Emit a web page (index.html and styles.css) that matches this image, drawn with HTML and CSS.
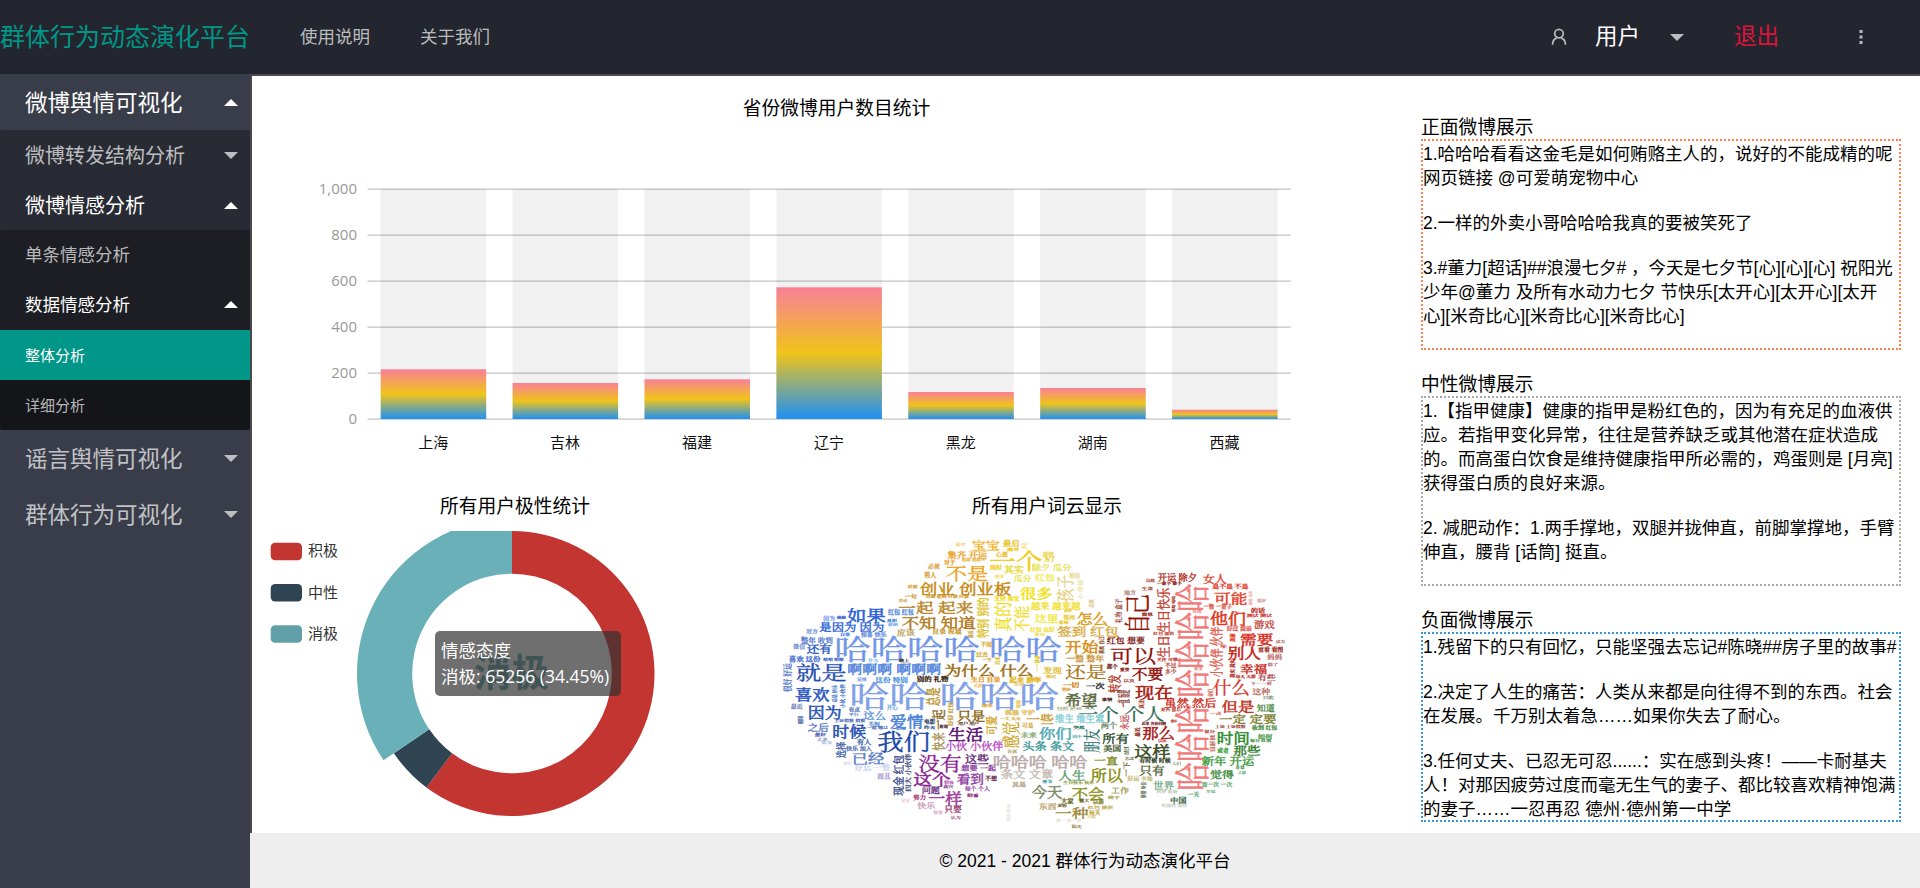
FILE: index.html
```html
<!DOCTYPE html>
<html lang="zh-CN">
<head>
<meta charset="utf-8">
<title>群体行为动态演化平台</title>
<link rel="stylesheet" href="styles.css">
</head>
<body>
<div class="app">
  <header class="header">
    <div class="logo">群体行为动态演化平台</div>
    <nav class="nav"><a>使用说明</a><a>关于我们</a></nav>
    <div class="account">
      <svg class="icon-user" width="16" height="18" viewBox="0 0 16 18"><circle cx="8" cy="5.6" r="4.3"/><path d="M1.6 16.8V16a6.4 6.4 0 0 1 4-5.9M14.4 16.8V16a6.4 6.4 0 0 0-4-5.9"/></svg>
      <span class="user-name">用户</span>
      <i class="caret caret-down"></i>
      <a class="logout">退出</a>
      <svg class="icon-more" width="4" height="16" viewBox="0 0 4 16"><rect x=".5" y="1" width="3" height="3"/><rect x=".5" y="6.5" width="3" height="3"/><rect x=".5" y="12" width="3" height="3"/></svg>
    </div>
  </header>
  <div class="body">
    <aside class="side">
      <div class="item top on">微博舆情可视化<i class="caret caret-up"></i></div>
      <div class="sub level2">
        <div class="item">微博转发结构分析<i class="caret caret-down"></i></div>
        <div class="item on">微博情感分析<i class="caret caret-up"></i></div>
        <div class="sub level3">
          <div class="item">单条情感分析</div>
          <div class="item on">数据情感分析<i class="caret caret-up"></i></div>
          <div class="level4">
            <div class="item active">整体分析</div>
            <div class="item">详细分析</div>
          </div>
        </div>
      </div>
      <div class="item top">谣言舆情可视化<i class="caret caret-down"></i></div>
      <div class="item top">群体行为可视化<i class="caret caret-down"></i></div>
    </aside>
    <div class="content">
      <main class="main">
        <div class="charts">
          <section class="bar-card">
            <h2 class="title">省份微博用户数目统计</h2>
            <svg class="bar-chart" id="bars" width="1169" height="370" viewBox="252 122 1169 370">
              <defs><linearGradient id="barFill" x1="0" y1="0" x2="0" y2="1"><stop offset="0" stop-color="#f88098"/><stop offset=".5" stop-color="#f0c419"/><stop offset="1" stop-color="#1e90f5"/></linearGradient></defs>
            </svg>
          </section>
          <div class="row">
            <section class="pie-card">
              <h2 class="title">所有用户极性统计</h2>
              <div class="pie-wrap">
                <svg width="518" height="313" viewBox="252 520 518 313">
                  <defs><clipPath id="pieClip"><rect x="252" y="531" width="518" height="302"/></clipPath></defs>
                  <g clip-path="url(#pieClip)" id="pie"></g>
                  <g class="legend">
                    <rect x="270.7" y="542.7" width="31.3" height="17.5" rx="4.4" fill="#c23531"/><text x="308" y="556">积极</text>
                    <rect x="270.7" y="584" width="31.3" height="17.5" rx="4.4" fill="#2f4554"/><text x="308" y="597.5">中性</text>
                    <rect x="270.7" y="625.3" width="31.3" height="17.5" rx="4.4" fill="#61a0a8"/><text x="308" y="638.5">消极</text>
                  </g>
                  <text class="pie-label" x="511.5" y="686">消极</text>
                </svg>
                <div class="tooltip">情感态度<br>消极: 65256 (34.45%)</div>
              </div>
            </section>
            <section class="cloud-card">
              <h2 class="title">所有用户词云显示</h2>
              <svg class="cloud" id="cloud" width="530" height="313" viewBox="0 0 1590 939"></svg>
            </section>
          </div>
        </div>
        <aside class="posts">
          <h3>正面微博展示</h3>
          <div class="post-box positive">
            <p>1.哈哈哈看看这金毛是如何贿赂主人的，说好的不能成精的呢<br>网页链接 @可爱萌宠物中心</p>
            <p>2.一样的外卖小哥哈哈哈我真的要被笑死了</p>
            <p>3.#董力[超话]##浪漫七夕# ，今天是七夕节[心][心][心] 祝阳光<br>少年@董力 及所有水动力七夕 节快乐[太开心][太开心][太开<br>心][米奇比心][米奇比心][米奇比心]</p>
          </div>
          <h3>中性微博展示</h3>
          <div class="post-box neutral">
            <p>1.【指甲健康】健康的指甲是粉红色的，因为有充足的血液供<br>应。若指甲变化异常，往往是营养缺乏或其他潜在症状造成<br>的。而高蛋白饮食是维持健康指甲所必需的，鸡蛋则是 [月亮]<br>获得蛋白质的良好来源。</p>
            <p>2. 减肥动作：1.两手撑地，双腿并拢伸直，前脚掌撑地，手臂<br>伸直，腰背 [话筒] 挺直。</p>
          </div>
          <h3>负面微博展示</h3>
          <div class="post-box negative">
            <p>1.残留下的只有回忆，只能坚强去忘记#陈晓##房子里的故事#</p>
            <p>2.决定了人生的痛苦：人类从来都是向往得不到的东西。社会<br>在发展。千万别太着急……如果你失去了耐心。</p>
            <p>3.任何丈夫、已忍无可忍......：实在感到头疼！——卡耐基夫<br>人！对那因疲劳过度而毫无生气的妻子、都比较喜欢精神饱满<br>的妻子……一忍再忍 德州·德州第一中学</p>
          </div>
        </aside>
      </main>
      <footer class="footer">© 2021 - 2021 群体行为动态演化平台</footer>
    </div>
  </div>
</div>
<script src="charts.js"></script>
</body>
</html>
```
FILE: styles.css
```css
* { box-sizing: border-box; }
body {
  margin: 0;
  font-family: "Liberation Sans", "Noto Sans CJK SC", sans-serif;
  font-size: 17.5px;
  color: #000;
  background: #fff;
}
.app { display: flex; flex-direction: column; height: 888px; width: 1920px; overflow: hidden; }
.header { flex: none; display: flex; align-items: center; height: 74px; background: #23262e; color: rgba(255,255,255,.7); line-height: 74px; }
.logo { width: 250px; font-size: 25px; color: #009688; white-space: nowrap; }
.nav { display: flex; gap: 50px; padding-left: 50px; }
.account { display: flex; align-items: center; margin-left: auto; padding-right: 57px; }
.icon-user { fill: none; stroke: #b9babd; stroke-width: 1.7; margin-right: 28px; }
.user-name { font-size: 22.5px; color: #fff; margin-right: 30px; }
.logout { font-size: 22.5px; color: #dc143c; margin: 0 80px 0 50px; }
.icon-more { fill: #b9babd; }
.caret { display: block; width: 0; height: 0; border: 7px solid transparent; }
.caret-down { border-top-color: #bdbec1; border-bottom-width: 0; }
.caret-up { border-bottom-color: #fff; border-top-width: 0; }

.body { flex: 1; display: flex; min-height: 0; }
.side { flex: none; width: 250px; background: #393d49; color: rgba(255,255,255,.7); }
.item { display: flex; align-items: center; justify-content: space-between; height: 50px; padding: 0 12px 2px 25px; white-space: nowrap; }
.item .caret { margin-top: 2px; }
.item.top { height: 56px; font-size: 22.5px; }
.item.on, .item.active { color: #fff; }
.item.active { background: #009688; }
.sub { border-radius: 2px; overflow: hidden; }
.level2 { background: #282b33; font-size: 20px; }
.level3 { background: #1c1e24; font-size: 17.5px; }
.level3 .item { padding-bottom: 3px; }
.level4 { background: #141519; font-size: 15px; }
.level4 .item { padding-bottom: 2px; }

.content { flex: 1; display: flex; flex-direction: column; min-width: 0; }
.main { flex: 1; display: flex; min-height: 0; border: solid #4a4a4a; border-width: 2px 0 0 2px; }
.charts { width: 1169px; padding-top: 18px; }
.title { margin: 0; height: 28px; font-size: 18.75px; font-weight: 400; line-height: 30px; text-align: center; }
svg { display: block; }
.row { display: flex; }
.pie-card { width: 518px; }
.pie-card .title { padding-left: 8px; }
.cloud-card { width: 554px; }
.pie-wrap { position: relative; }
.tooltip { position: absolute; left: 183px; top: 111px; width: 186px; height: 65px; padding: 6px; border-radius: 5px; background: rgba(50,50,50,.7); color: #fff; font-family: "Open Sans", "Noto Sans CJK SC", sans-serif; font-size: 17.5px; line-height: 26.25px; white-space: nowrap; }
.legend text { font-size: 15px; fill: #333; }
.pie-label { font-size: 37.5px; font-weight: 700; text-anchor: middle; fill: #61a0a8; }
.axis-y { font-family: "Open Sans", sans-serif; font-size: 15px; fill: #999; text-anchor: end; }
.axis-x { font-size: 15px; fill: #111; text-anchor: middle; }
.cloud text { font-family: "Noto Serif CJK SC", "Noto Sans CJK SC", serif; font-size: 100px; font-weight: 400; white-space: pre; }

.posts { width: 480px; padding-top: 37px; white-space: nowrap; }
.posts h3 { margin: 0; height: 26px; font-size: 18.75px; line-height: 30px; font-weight: 400; }
.post-box { border: 2px dotted; line-height: 24px; margin-bottom: 20px; padding-top: 1px; }
.post-box p { margin: 0 0 21px; color: #000; }
.positive { border-color: #ff7f50; height: 211px; }
.neutral { border-color: #a9a9a9; height: 190px; }
.negative { border-color: #3498db; height: 190px; }
.footer { flex: none; height: 55px; background: #eee; text-align: center; line-height: 57px; }
```
FILE: charts.js
```js
const NS = 'http://www.w3.org/2000/svg';
function add(parent, tag, attrs, text) {
  const el = document.createElementNS(NS, tag);
  for (const k in attrs) el.setAttribute(k, attrs[k]);
  if (text) el.textContent = text;
  parent.appendChild(el);
  return el;
}

// Province bar chart
const bars = document.getElementById('bars');
const provinces = [['上海', 369.3], ['吉林', 383], ['福建', 379.3], ['辽宁', 287.3], ['黑龙', 392], ['湖南', 388], ['西藏', 409.7]];
const x0 = 367.5, step = 131.9, base = 419;
[0, 200, 400, 600, 800, 1000].forEach((v, i) => {
  const y = base - i * 46;
  add(bars, 'rect', { x: x0, y: y - .5, width: step * 7, height: 1.25, fill: '#c4c4c4' });
  add(bars, 'text', { class: 'axis-y', x: 357, y: y + 5 }, v.toLocaleString('en-US'));
});
provinces.forEach(([name, top], i) => {
  const x = x0 + i * step + 13.2;
  add(bars, 'rect', { x, y: 189, width: 105.5, height: 230, fill: 'rgba(0,0,0,.055)' });
  add(bars, 'rect', { x, y: top, width: 105.5, height: base - top, fill: 'url(#barFill)' });
  add(bars, 'text', { class: 'axis-x', x: x + 52.5, y: 447.5 }, name);
});

// Polarity ring
const pie = document.getElementById('pie');
function slice(a, b, r, R, fill) {
  const p = (ang, rad) => {
    const t = ang * Math.PI / 180;
    return (512 + rad * Math.sin(t)) + ' ' + (673.5 - rad * Math.cos(t));
  };
  const big = b - a > 180 ? 1 : 0;
  add(pie, 'path', { fill, d: `M${p(a, R)}A${R} ${R} 0 ${big} 1 ${p(b, R)}L${p(b, r)}A${r} ${r} 0 ${big} 0 ${p(a, r)}Z` });
}
slice(0, 216.9, 99.8, 142.5, '#c23531');
slice(216.9, 236, 99.8, 142.5, '#2f4554');
slice(236, 360, 99.8, 155, '#6ab0b8');

// Word cloud: text, x, y, width, height, colour, v for vertical words
const clouds = [
[0, 0, `宝宝,605,62,85,32,#f0b323
最后,698,60,52,20,#e8c020
痛苦,712,84,36,11,#f0c828
前早,557,71,30,9,#f4cf7a
小心,752,68,16,20,#f4e070,v
集齐 开运,532,93,120,22,#e8a01c
心愿,678,96,36,14,#f0c040
一个,658,92,160,60,#f0cc10
不是,527,135,128,48,#efa011
对于,522,118,34,14,#e8a030
很高 很高兴,575,116,70,9,#e8b040
必须,473,130,36,14,#e0a850
男人,462,156,38,16,#d9a13a
同时,660,135,36,14,#f0d030
其实,702,136,60,24,#e8d83a
瓜分,732,165,52,20,#e8e040
晚安,675,165,28,9,#f0e060
创业 创业板,450,186,274,38,#c88a14
联赢,413,195,30,10,#d8a850
一句,404,224,36,12,#c89a40
合适 收到 付款 付款,467,224,130,11,#d09a30
支持 淘宝,672,226,76,14,#f0e030
一起 起来,385,243,225,36,#b8862a
活动,386,237,26,9,#d0a860
不知 知道,395,288,222,38,#b07a1c
应该,380,327,55,20,#b89a50
目录 祝福,487,327,88,14,#d0a040
很多,750,200,98,36,#f0e010
真的,675,245,50,90,#eedd10,v
不能,733,257,46,78,#eedd10,v
特别 别的,622,232,34,122,#dcc020,v
最近,594,332,12,22,#d0a040,v
如果,232,264,115,42,#2a5fd8
红包 红包,354,268,78,16,#5a8ae0
因为,160,287,35,13,#7aa0e8
她她,200,289,28,9,#3060d0
真相,350,297,30,10,#4080e0
好运,354,309,30,10,#60a0e8
是因为 因为,148,307,195,30,#2a5fd8
对方,108,325,36,14,#7a9ae0
自带,210,338,30,10,#4878e0
惊喜 快乐,272,336,78,14,#6a90e0
整年 收到,92,350,97,20,#4a70c8
微信,70,374,35,12,#7a98d8
还有,110,373,75,30,#2a55c0
喜欢 这份,56,407,96,16,#4a70d0
哈哈 哈哈,160,414,62,9,#2a50c0
哈哈哈哈 哈哈,193,347,682,80,#7195e6
作为,295,416,30,10,#80c0e8
晚上,388,417,30,10,#403020
不同,632,366,34,14,#d8b040
过去,618,396,36,14,#d8b040
一生,636,413,30,10,#d0a030
近来,675,410,12,24,#d8c030,v
就是,78,430,152,55,#1f4db0
啊啊啊 啊啊啊,232,432,282,34,#4a80dc
为什么 什么,523,432,268,36,#9a6a10
一时,793,405,14,50,#e0c820,v
很好 好运,42,430,24,86,#5070c8,v
觉得,260,474,30,10,#70a0e8
这份 特别,316,470,98,16,#5a9ae0
别的 礼物,440,468,96,16,#3a2a14
生日 目录,603,470,88,14,#e0a030
起来 新年,718,470,96,16,#e0b828`],
[780, 0, `感情,38,96,34,14,#f0d860
为了,42,112,34,12,#e8d020
除夕 瓜分,5,132,120,20,#e8e040
相信,118,160,32,12,#e8d890
红包,15,163,60,20,#f0e850
小 希望,142,180,14,58,#f0e8b0,v
孩子,80,165,50,82,#e6cc70,v
越来 越来越,2,248,150,22,#f0e020
必须,177,238,14,26,#e0c890,v
这里,14,282,72,26,#f0e83a
郑州,100,287,36,12,#e8d040
商场,103,270,22,8,#e8c830
影响,88,303,28,9,#e8c830
怎么,140,278,95,38,#e09a10
红包 包好,0,323,75,12,#f0e040
身边,12,341,34,9,#f0d840
签到 红包,82,318,185,32,#d8aa40
开始,105,362,100,38,#d88a10
一整 整年,108,404,115,20,#c89030
还是,105,434,125,45,#a8700c
发现,40,440,55,20,#e0b820
情况,48,466,30,9,#e8c040
喜欢 自己,208,350,12,52,#8a4a20,v
开运 除夕,383,160,118,24,#b02a20
自然,347,177,28,9,#b04a40
一辈子 辈子,380,185,76,11,#902018
生命,335,199,34,11,#b05048
地方,282,210,36,14,#b89090
女人,518,162,72,28,#e03a20
是不是 不是,547,192,108,14,#e04838
自己,285,222,72,120,#8f1208,v
简单,335,278,34,11,#902820
礼物 盒子,255,235,20,75,#a04a40,v
生日 生日快乐,380,203,36,210,#c04030,v
哈哈 哈哈,425,228,11,48,#a02820,v
红包 福利,370,336,62,10,#c05040
关注 可惜,380,415,64,10,#b02820
哈哈哈 哈哈哈哈,437,190,100,622,#f07878,v
可能,552,217,100,36,#e8402c
一整 一辈子,520,254,86,12,#d86050
可用,487,271,28,9,#f08070
看看 走走,658,212,10,44,#f0b0a8,v
很好,682,237,26,9,#d09088
的话,663,262,42,14,#c03830
他们,540,273,108,42,#e03820
测试 测试,650,281,76,10,#c84840
游戏,672,302,62,24,#c04a40
好过 提前,590,319,76,12,#d86058
需要,630,340,100,36,#d82818
美丽,598,340,14,26,#e03020,v
成为,737,360,28,9,#b07070
别人,593,380,100,38,#c82010
查看 看图,684,381,76,12,#a03028
年,570,378,22,8,#d03020
妈妈,712,403,44,16,#c07878
幸福,630,432,82,30,#c82820
除了,714,430,30,10,#b07070
真实 真实,598,418,14,56,#b02018,v
每天 天都,617,465,60,10,#c03030
有些,683,464,54,18,#a84048
可以,240,380,138,52,#8a0a04
红包 想要,230,350,115,20,#7a1010
那个,230,432,34,12,#7a2828
重要,270,445,28,9,#902020
不过,405,430,34,12,#b05850
多少,405,447,34,12,#b05850
不要,305,442,95,38,#900e08
安全,492,442,26,9,#e07060
小伙伴 伙伴,540,320,36,152,#e05a50,v`],
[0, 450, `喜欢,75,52,104,40,#2a55c0
总是 快乐,186,45,12,52,#4a78c8,v
小伙 小伙伴,208,42,14,72,#4a78c8,v
最近,62,103,36,12,#8090c0
有点,236,112,34,12,#5878b8
平行,236,130,30,9,#7090c8
开心,350,106,34,12,#80b0e8
因为,113,106,102,40,#2050b8
相同,86,138,12,24,#4060a0,v
上证指数 指数,192,148,94,10,#5070b8
不到,295,156,34,12,#6090d8
之后,113,160,64,24,#5a78c0
最好,134,187,34,11,#5060b0
太多,140,202,34,11,#90a0d8
认为,155,215,30,9,#a0b0d8
时候,187,165,102,40,#1f4fb0
一般 哪过,290,169,64,10,#5878b8
说说,378,173,30,9,#6898d8
这么,280,122,68,26,#5a90e0
哈哈 哈哈哈,238,33,630,84,#7f9fe6
爱情,360,133,100,40,#4a7fd8
电影,462,148,34,12,#304868
昨天,462,166,34,11,#406090
谢谢,508,168,26,8,#503030
总是,470,52,38,56,#b8902a,v
一起,487,118,36,62,#8a6a2a,v
快来,487,187,36,55,#a89050,v
好好 红包,534,96,14,72,#c8a040,v
近期,613,44,24,8,#f0c060
父母,732,40,30,10,#e8c060
清单,635,102,34,11,#d8b050
年年,737,90,14,24,#e0c030,v
只是,562,122,84,34,#8a6410
用户 用户,565,157,62,10,#604030
可爱,648,138,32,56,#d0a018,v
熊猫 守护,705,120,90,14,#e0c060
一大 天天,690,140,62,10,#d8a830
可是,756,160,34,12,#d8b050
感觉,698,155,50,80,#c8a010,v
告诉,712,240,30,9,#a8a060
未来,752,187,48,16,#90b080
我们,322,183,158,62,#1848a8
生活,535,172,105,42,#5a1070
小伙 小伙伴,525,215,175,28,#b84ac0
有人,260,208,44,16,#5070b0
选择,197,215,30,50,#3a5aa8,v
快乐 加入,228,226,78,14,#6078b8
已经,245,247,98,36,#5a7ac8
举行,220,277,26,8,#d0d8f0
好运 一整,254,284,106,18,#c8d4f0
而且,322,310,40,16,#b0a0d0
现金 红包,370,255,32,122,#3a4a88,v
四大 小伙伴,406,250,16,115,#505888,v
没有,445,253,130,54,#8a1a90
这些,585,252,72,28,#5a1a70
想要 一起,574,286,104,16,#904aa8
哈哈哈 哈哈,668,255,284,38,#b8a8a8
条文 文章,692,297,158,28,#c4b8b0
这个,430,308,112,42,#8a2090
给我,523,333,28,9,#b060b0
看到,560,312,82,34,#8a3aa0
不想,645,318,36,14,#703058
其是,726,335,42,14,#b8a890
问题,455,350,55,22,#6a2a80
高兴,520,346,30,9,#8a3a90
每个 个人,584,346,76,14,#a060b0
一样,475,365,102,40,#a03a9a
给看,592,372,34,11,#903080
努力,430,373,38,14,#b03a78
宝宝,392,388,28,9,#f0c0d8
快乐,442,396,54,20,#c898b8
只要,523,407,52,22,#902a6a
管管,490,424,28,9,#e0b0d0
认为,542,438,30,10,#a86a90
现在 如此,712,403,10,50,#e8e4dc,v
头条 条文,757,215,156,28,#3a9a9a`],
[780, 450, `新年,0,22,34,11,#e8b828
一切,98,35,50,16,#d08a30
一次,168,38,56,16,#3a3a40
曾经,95,54,28,9,#e0a040
希望,105,70,98,38,#5a6a40
事情,215,83,32,10,#501818
包括 好运,80,112,76,10,#b0b890
可笑,165,109,28,9,#506848
一个 个人,145,108,258,46,#2a6a50
一些,-12,132,84,28,#c8962a
维生 维生素,75,135,148,24,#80ccd4
两个,212,157,50,18,#5a7a58
突然,130,168,34,11,#3a8070
田中,127,195,28,9,#60b0b8
你们,27,172,98,36,#4aa8b0
朋友,163,177,46,72,#1a6a64,v
所有,217,190,80,32,#2a4a2a
美国,220,225,54,20,#3a5a30
方式 方式,284,230,12,24,#304a20,v
方式,284,262,28,9,#60683a
转发,235,14,36,55,#b03a2a,v
以及,280,26,34,11,#b06050
一直 而是,262,60,36,52,#8a4a40,v
永远,270,135,26,45,#c04a50,v
真正,328,88,13,28,#b03a30,v
现在,315,47,115,40,#a81a10
虽然 然后,403,85,157,28,#d02a20
是否 最后,392,115,62,10,#b84838
你们,535,58,12,22,#d06050,v
什么,548,30,112,46,#d83020
下一 一样,662,37,64,9,#b06060
这种,667,55,54,20,#b86a60
只能,698,78,34,11,#90a080
但是,575,90,98,36,#c03018
知道,680,102,54,22,#4a8a40
一点,540,126,34,11,#d07060
一定 定要,567,133,173,30,#7a7a2a
上证 上证指数,555,164,92,10,#a05040
收到 红包,666,167,76,12,#4a8a40
近来 各种问题,335,156,74,9,#702020
最好,422,150,20,8,#c03828
那么,337,170,98,38,#a81818
最近,315,172,13,28,#903028,v
以前,384,208,26,8,#c05050
这样,313,222,108,42,#3a4a20
有时候 时候,328,264,94,12,#3a4a30
人们,425,278,28,9,#90b080
只有,328,286,76,32,#5a6a40
设计,523,180,32,11,#b04838
这是 最好 游戏,540,195,12,50,#c06858,v
时间,560,184,100,38,#2a8a2a
如何,683,190,44,14,#50a050
每日 红利,660,206,64,10,#3a8a3a
那些,610,226,82,32,#2a7a2a
或者,562,236,34,12,#30a030
新年 开运,515,258,158,28,#3a9a3a
觉得,540,300,72,26,#3a8a3a
非常,616,289,28,9,#4a9050
之间,625,304,22,8,#60a868
一直,192,258,72,26,#7a8a20
一下,280,275,20,45,#5a6a20,v
所以,182,295,96,40,#8a9010
好运 卡地,292,318,76,12,#c8c080
事情 单位,334,335,12,50,#708070,v
第一次 一次,515,336,92,12,#70b078
一天,473,366,35,12,#60a878
早退,528,360,28,9,#80b890
人生,85,300,82,32,#5aa070
春节,37,330,30,10,#40a0a8
生日快乐 快乐,100,333,92,10,#90a040
世界,370,334,62,24,#7aaa8a
时评 市场,380,360,62,11,#c0d0b8
中国,420,380,50,20,#2a5a3a
有没有 没有,394,400,78,11,#c8d0c0
不会,125,352,98,38,#8a9020
工作,243,350,54,20,#a09a50
终于,234,378,36,11,#b0a850
今天,5,345,92,38,#7a8a60
东西,27,398,52,20,#c0a070
宠物,82,404,28,9,#706838
大家,93,384,38,16,#6a6a20
重大,148,389,30,9,#606010
以前,188,389,34,12,#808020
红包 提供,174,408,76,11,#c8b060
一种,75,412,100,34,#a08a40
每天,177,422,34,12,#c8a848
才能,170,437,28,9,#e0cc80
第一 第一次,78,448,76,9,#e8e0cc
陆光,125,466,30,9,#a09050`]
];
const cloud = document.getElementById('cloud');
clouds.forEach(([dx, dy, rows]) => rows.split('\n').forEach(row => {
  const [word, xs, ys, ws, hs, fill, v] = row.split(',');
  const x = +xs + dx, y = +ys + dy, w = +ws, h = +hs;
  // Small words get a heavier outline so they stay legible
  const size = v ? w : h;
  const weight = size < 18 ? 6 : size < 45 ? 3.5 : 1.5;
  const el = add(cloud, 'text', { fill, stroke: fill, 'stroke-width': weight }, word);
  const len = el.getComputedTextLength();
  el.setAttribute('transform', v
    ? `translate(${x + w} ${y + h}) rotate(-90) scale(${h / len} ${w / 93}) translate(0 -8)`
    : `translate(${x} ${y + h}) scale(${w / len} ${h / 93}) translate(0 -8)`);
}));
```
